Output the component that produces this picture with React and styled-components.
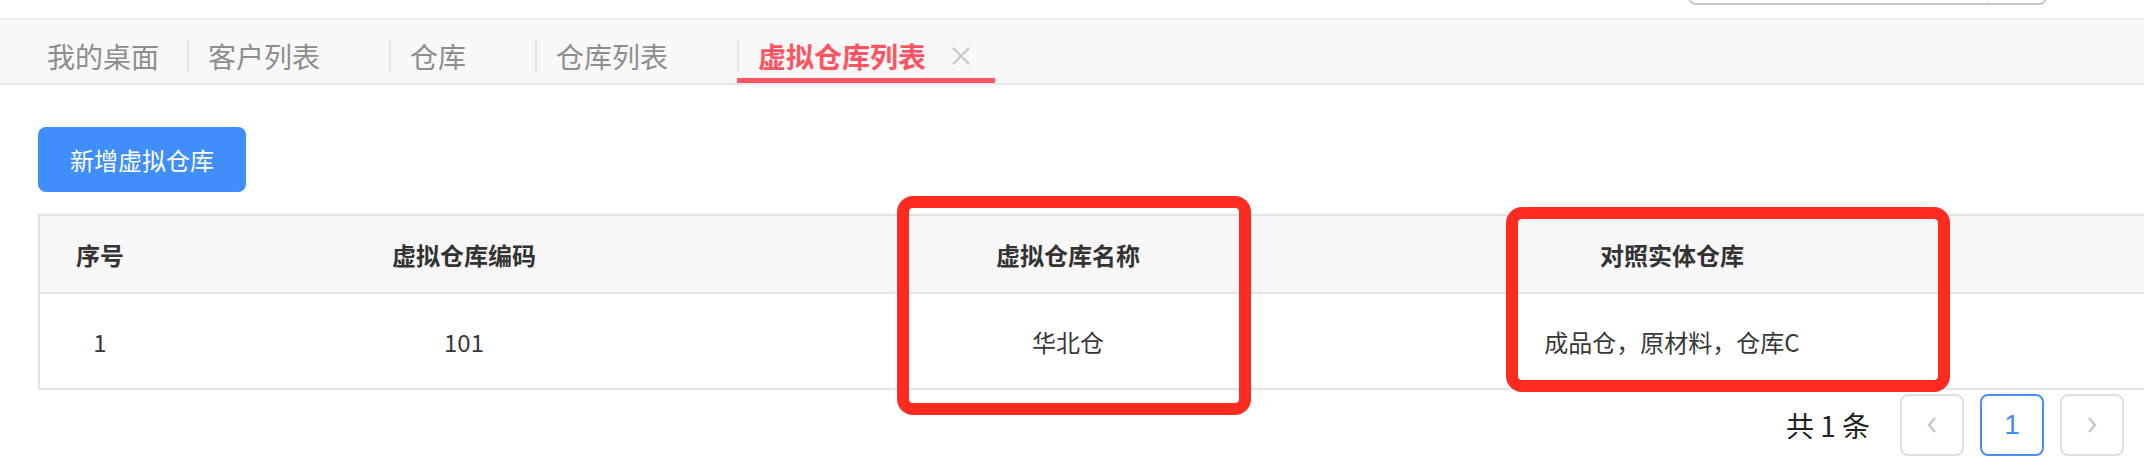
import React from "react";
import styled, { createGlobalStyle } from "styled-components";

const GlobalStyle = createGlobalStyle`
  html, body {
    margin: 0;
    padding: 0;
    background: #fff;
    overflow: hidden;
  }
  body {
    font-family: "Noto Sans CJK SC", "Noto Sans", "Liberation Sans", sans-serif;
    color: #333;
  }
  * { box-sizing: border-box; }
`;

const tabs = [
  { label: "我的桌面", closable: false },
  { label: "客户列表", closable: true },
  { label: "仓库", closable: true },
  { label: "仓库列表", closable: true },
  { label: "虚拟仓库列表", closable: true, active: true },
];

const columns = [
  { title: "序号", width: 120 },
  { title: "虚拟仓库编码", width: 608 },
  { title: "虚拟仓库名称", width: 600 },
  { title: "对照实体仓库", width: 608 },
  { title: "", width: 240 },
];

const rows = [["1", "101", "华北仓", "成品仓，原材料，仓库C", ""]];

function App() {
  return (
    <Page>
      <GlobalStyle />
      <TopBar>
        <SearchBox>
          <SearchField />
          <SearchSuffix />
        </SearchBox>
      </TopBar>

      <TabBar>
        {tabs.map((t, i) => (
          <Tab key={t.label} $active={t.active}>
            <TabLabel $first={i === 0} $closable={t.closable}>
              <TabText $active={t.active}>{t.label}</TabText>
              {t.closable && (
                <CloseIcon $show={t.active} viewBox="0 0 20 20">
                  <line x1="2" y1="2" x2="18" y2="18" />
                  <line x1="18" y1="2" x2="2" y2="18" />
                </CloseIcon>
              )}
            </TabLabel>
          </Tab>
        ))}
      </TabBar>

      <Content>
        <PrimaryButton>新增虚拟仓库</PrimaryButton>

        <TableWrap>
          <Table>
            <colgroup>
              {columns.map((c, i) => (
                <col key={i} style={{ width: c.width }} />
              ))}
            </colgroup>
            <thead>
              <tr>
                {columns.map((c, i) => (
                  <Th key={i}>{c.title}</Th>
                ))}
              </tr>
            </thead>
            <tbody>
              {rows.map((r, ri) => (
                <tr key={ri}>
                  {r.map((cell, ci) => (
                    <Td key={ci}>{cell}</Td>
                  ))}
                </tr>
              ))}
            </tbody>
          </Table>
        </TableWrap>

        <Pager>
          <Total>共 1 条</Total>
          <PageBtn disabled>
            <svg width="12" height="18" viewBox="0 0 12 18">
              <polyline points="9,2 3,9 9,16" />
            </svg>
          </PageBtn>
          <PageBtn $current>1</PageBtn>
          <PageBtn>
            <svg width="12" height="18" viewBox="0 0 12 18">
              <polyline points="3,2 9,9 3,16" />
            </svg>
          </PageBtn>
        </Pager>
      </Content>

      <Highlight $left={897} $top={196} $w={354} $h={219} />
      <Highlight $left={1506} $top={207} $w={444} $h={185} />
    </Page>
  );
}

export default App;

const Page = styled.div`
  position: relative;
  width: 2144px;
  height: 470px;
  overflow: hidden;
`;

const TopBar = styled.div`
  height: 18px;
  display: flex;
  justify-content: flex-end;
  padding-right: 97px;
  overflow: hidden;
`;

const SearchBox = styled.div`
  display: flex;
  width: 359px;
  height: 40px;
  margin-top: -35px;
  border: 2px solid #c6c6c6;
  border-radius: 8px;
`;

const SearchField = styled.div`
  flex: 1;
`;

const SearchSuffix = styled.div`
  width: 57px;
  border-left: 1px solid #e2e2e2;
`;

const TabBar = styled.div`
  display: flex;
  height: 67px;
  padding-left: 26px;
  background: #f8f8f8;
  border-top: 2px solid #eeeeee;
  border-bottom: 2px solid #e5e6ee;
`;

const Tab = styled.div`
  display: flex;
  align-items: center;
  height: 63px;
  padding-top: 14px;
  border-bottom: 5px solid ${(p) => (p.$active ? "#ff5462" : "transparent")};
`;

const TabLabel = styled.div`
  display: flex;
  align-items: center;
  gap: 25px;
  height: 32px;
  border-left: ${(p) => (p.$first ? "none" : "2px solid #e2e4ec")};
  padding-left: ${(p) => (p.$first ? "21px" : "19px")};
  padding-right: ${(p) => (p.$closable ? "24px" : "28px")};
`;

const TabText = styled.span`
  font-size: 28px;
  line-height: 32px;
  color: ${(p) => (p.$active ? "#ff5462" : "#8e8e8e")};
  font-weight: ${(p) => (p.$active ? 700 : 400)};
  white-space: nowrap;
`;

const CloseIcon = styled.svg`
  width: 20px;
  height: 20px;
  visibility: ${(p) => (p.$show ? "visible" : "hidden")};
  stroke: #c9c9c9;
  stroke-width: 2.4;
  fill: none;
`;

const Content = styled.div`
  padding: 42px 0 0 38px;
`;

const PrimaryButton = styled.button`
  display: block;
  width: 208px;
  height: 65px;
  border: none;
  border-radius: 8px;
  background: #3f8efc;
  color: #fff;
  font-family: inherit;
  font-size: 24px;
  padding: 0;
`;

const TableWrap = styled.div`
  margin-top: 22px;
  overflow: hidden;
`;

const Table = styled.table`
  table-layout: fixed;
  width: 2178px;
  border-collapse: separate;
  border-spacing: 0;
  border-top: 2px solid #e3e3e8;
  border-left: 2px solid #e3e3e8;
`;

const Th = styled.th`
  height: 78px;
  padding: 0;
  background: #f7f7f7;
  border-bottom: 2px solid #e6e6ea;
  font-size: 24px;
  font-weight: 700;
  color: #333;
  text-align: center;
`;

const Td = styled.td`
  height: 96px;
  padding: 0;
  border-bottom: 2px solid #e3e3e8;
  font-size: 24px;
  color: #383838;
  text-align: center;
`;

const Pager = styled.div`
  display: flex;
  justify-content: flex-end;
  align-items: center;
  gap: 16px;
  margin-top: 4px;
  padding-right: 20px;
`;

const Total = styled.span`
  font-size: 28px;
  color: #222;
  margin-right: 14px;
  white-space: pre;
`;

const PageBtn = styled.button`
  display: flex;
  align-items: center;
  justify-content: center;
  width: 64px;
  height: 62px;
  padding: 0;
  background: #fff;
  border: 2px solid ${(p) => (p.$current ? "#4a8ff5" : "#dcdee3")};
  border-radius: 8px;
  color: #3f8efc;
  font-family: "Liberation Sans", sans-serif;
  font-size: 28px;

  svg polyline {
    fill: none;
    stroke: #c3c6cc;
    stroke-width: 2.4;
  }
`;

const Highlight = styled.div`
  position: absolute;
  left: ${(p) => p.$left}px;
  top: ${(p) => p.$top}px;
  width: ${(p) => p.$w}px;
  height: ${(p) => p.$h}px;
  border: 12px solid #fe2b20;
  border-radius: 16px;
  pointer-events: none;
`;
